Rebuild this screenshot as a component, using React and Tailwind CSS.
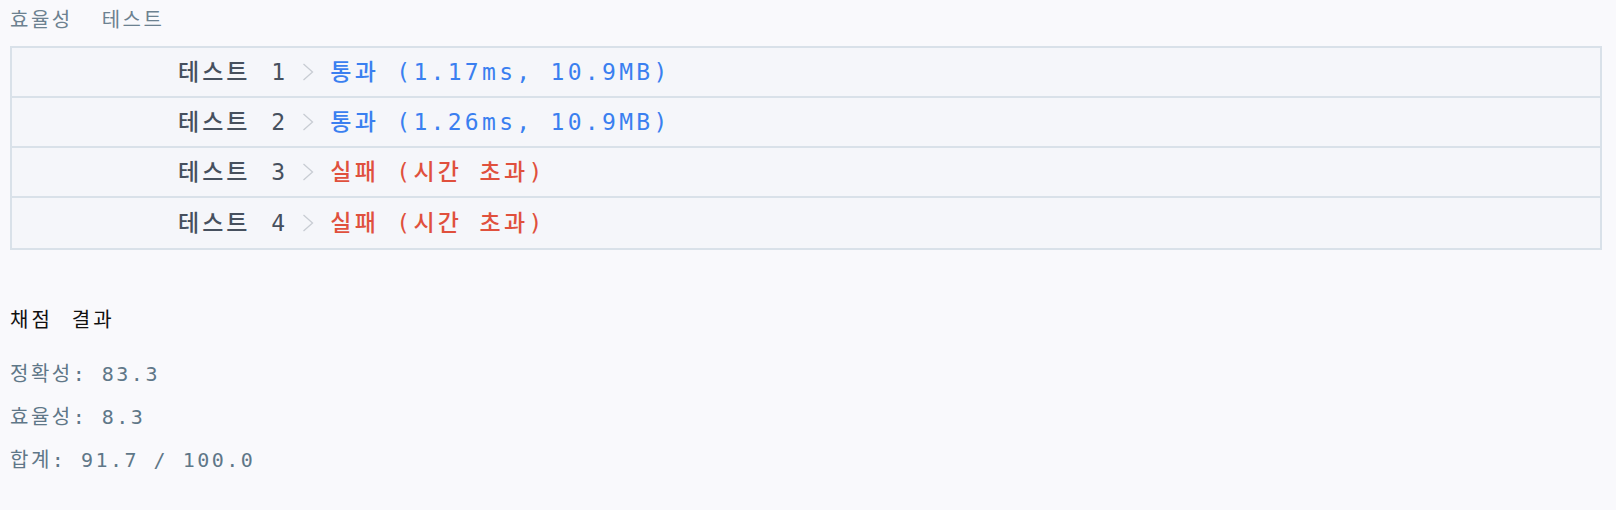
const tests = [
  { no: 1, pass: true, result: "통과 (1.17ms, 10.9MB)" },
  { no: 2, pass: true, result: "통과 (1.26ms, 10.9MB)" },
  { no: 3, pass: false, result: "실패 (시간 초과)" },
  { no: 4, pass: false, result: "실패 (시간 초과)" },
];

const scores = ["정확성: 83.3", "효율성: 8.3", "합계: 91.7 / 100.0"];

function Chevron() {
  return (
    <svg width="12" height="18" viewBox="0 0 12 18" className="ml-[14px] mr-[16px] shrink-0">
      <polyline points="1.5,1 10.5,9 1.5,17" fill="none" stroke="#c8ccd3" strokeWidth="1.3" />
    </svg>
  );
}

export default function App() {
  return (
    <div className="min-h-screen bg-[#f9f9fc] font-['DejaVu_Sans_Mono','Noto_Sans_CJK_KR',monospace] pt-[6px]">
      {/* Tabs */}
      <div className="flex gap-[29px] pl-[10px] text-[20px] leading-[28px] tracking-[2.5px] text-[#6c8190]">
        <span>효율성</span>
        <span>테스트</span>
      </div>

      {/* Result table */}
      <div className="ml-[10px] mr-[14px] mt-[12px] border-2 border-[#d9e1e9] bg-[#f5f6fa]">
        {tests.map((t, i) => (
          <div
            key={t.no}
            className={
              "flex h-[50px] items-center pl-[166px] text-[23px] font-medium tracking-[3px] " +
              (i < tests.length - 1 ? "border-b-2 border-[#d9e1e9]" : "")
            }
          >
            <span className="text-[#46505e]">
              테스트 <span className="ml-[4px]">{t.no}</span>
            </span>
            <Chevron />
            <span className={"tracking-[3.3px] " + (t.pass ? "text-[#3a7ff0]" : "text-[#e0503d]")}>
              {t.result}
            </span>
          </div>
        ))}
      </div>

      {/* Score */}
      <div className="mt-[56px] pl-[10px] text-[20px] leading-[28px] tracking-[2.5px]">
        <h3 className="text-[#111111] tracking-[3px] [word-spacing:4px]">채점 결과</h3>
        <div className="mt-[26px] flex flex-col gap-[15px] text-[#5f7788]">
          {scores.map((s) => (
            <p key={s}>{s}</p>
          ))}
        </div>
      </div>
    </div>
  );
}
